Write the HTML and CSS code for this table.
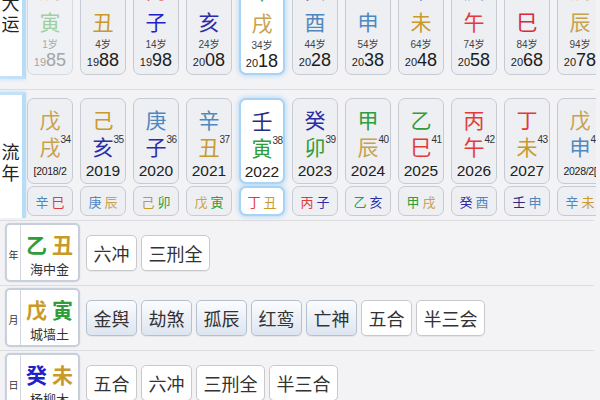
FILE: index.html
```html
<!DOCTYPE html>
<html lang="zh">
<head>
<meta charset="utf-8">
<link rel="stylesheet" href="styles.css">
</head>
<body>
<div class="page">
  <section class="dayun">
    <div class="side side-top"><span>大</span><span>运</span></div>
    <div class="cards">
      <div class="card dim"><span class="gz st tu-l">戊</span><span class="gz mu-l">寅</span><span class="age">1岁</span><span class="yr"><small>19</small>85</span></div>
      <div class="card"><span class="gz st huo">丁</span><span class="gz tu">丑</span><span class="age">4岁</span><span class="yr"><small>19</small>88</span></div>
      <div class="card"><span class="gz st huo">丙</span><span class="gz shui2">子</span><span class="age">14岁</span><span class="yr"><small>19</small>98</span></div>
      <div class="card"><span class="gz st mu">乙</span><span class="gz shui">亥</span><span class="age">24岁</span><span class="yr"><small>20</small>08</span></div>
      <div class="card sel"><span class="gz st mu">甲</span><span class="gz tu-l">戌</span><span class="age">34岁</span><span class="yr"><small>20</small>18</span></div>
      <div class="card"><span class="gz st shui">癸</span><span class="gz jin">酉</span><span class="age">44岁</span><span class="yr"><small>20</small>28</span></div>
      <div class="card"><span class="gz st shui">壬</span><span class="gz jin">申</span><span class="age">54岁</span><span class="yr"><small>20</small>38</span></div>
      <div class="card"><span class="gz st jin">辛</span><span class="gz tu">未</span><span class="age">64岁</span><span class="yr"><small>20</small>48</span></div>
      <div class="card"><span class="gz st jin">庚</span><span class="gz huo">午</span><span class="age">74岁</span><span class="yr"><small>20</small>58</span></div>
      <div class="card"><span class="gz st tu">己</span><span class="gz huo2">巳</span><span class="age">84岁</span><span class="yr"><small>20</small>68</span></div>
      <div class="card"><span class="gz st tu">戊</span><span class="gz tu-l">辰</span><span class="age">94岁</span><span class="yr"><small>20</small>78</span></div>
    </div>
  </section>

  <div class="sep"></div>

  <section class="liunian">
    <div class="side side-mid"><span>流</span><span>年</span></div>
    <div class="ln-body">
      <div class="cards">
        <div class="card2"><span class="gz tu-l">戊</span><span class="gz br tu-l">戌<sup>34</sup></span><span class="y2 sm">[2018/2</span></div>
        <div class="card2"><span class="gz tu">己</span><span class="gz br shui">亥<sup>35</sup></span><span class="y2">2019</span></div>
        <div class="card2"><span class="gz jin">庚</span><span class="gz br shui">子<sup>36</sup></span><span class="y2">2020</span></div>
        <div class="card2"><span class="gz jin">辛</span><span class="gz br tu">丑<sup>37</sup></span><span class="y2">2021</span></div>
        <div class="card2 sel"><span class="gz navy">壬</span><span class="gz br mu">寅<sup>38</sup></span><span class="y2">2022</span></div>
        <div class="card2"><span class="gz shui">癸</span><span class="gz br mu">卯<sup>39</sup></span><span class="y2">2023</span></div>
        <div class="card2"><span class="gz mu">甲</span><span class="gz br tu-l">辰<sup>40</sup></span><span class="y2">2024</span></div>
        <div class="card2"><span class="gz mu">乙</span><span class="gz br huo">巳<sup>41</sup></span><span class="y2">2025</span></div>
        <div class="card2"><span class="gz huo">丙</span><span class="gz br huo">午<sup>42</sup></span><span class="y2">2026</span></div>
        <div class="card2"><span class="gz huo">丁</span><span class="gz br tu">未<sup>43</sup></span><span class="y2">2027</span></div>
        <div class="card2"><span class="gz tu-l">戊</span><span class="gz br jin">申<sup>44</sup></span><span class="y2 sm">2028/2[</span></div>
      </div>
      <div class="cards subs">
        <div class="sub"><span class="jin">辛</span><span class="huo">巳</span></div>
        <div class="sub"><span class="jin">庚</span><span class="tu-l">辰</span></div>
        <div class="sub"><span class="tu">己</span><span class="mu">卯</span></div>
        <div class="sub"><span class="tu-l">戊</span><span class="mu">寅</span></div>
        <div class="sub sel"><span class="huo">丁</span><span class="tu">丑</span></div>
        <div class="sub"><span class="huo">丙</span><span class="shui">子</span></div>
        <div class="sub"><span class="mu">乙</span><span class="shui">亥</span></div>
        <div class="sub"><span class="mu">甲</span><span class="tu-l">戌</span></div>
        <div class="sub"><span class="shui">癸</span><span class="jin">酉</span></div>
        <div class="sub"><span class="navy">壬</span><span class="jin">申</span></div>
        <div class="sub"><span class="jin">辛</span><span class="tu">未</span></div>
      </div>
    </div>
  </section>

  <div class="sep sep-b"></div>

  <div class="prow">
    <div class="pillar"><span class="pl">年</span><div class="pm"><div class="gzb"><b class="mu">乙</b><b class="tu">丑</b></div><div class="ny">海中金</div></div></div>
    <div class="tags"><span class="tag">六冲</span><span class="tag">三刑全</span></div>
  </div>
  <div class="sep"></div>
  <div class="prow">
    <div class="pillar"><span class="pl">月</span><div class="pm"><div class="gzb"><b class="tu">戊</b><b class="mu">寅</b></div><div class="ny">城墙土</div></div></div>
    <div class="tags"><span class="tag shen">金舆</span><span class="tag shen">劫煞</span><span class="tag shen">孤辰</span><span class="tag shen">红鸾</span><span class="tag shen">亡神</span><span class="tag">五合</span><span class="tag">半三会</span></div>
  </div>
  <div class="sep"></div>
  <div class="prow">
    <div class="pillar"><span class="pl">日</span><div class="pm"><div class="gzb"><b class="shui2">癸</b><b class="tu">未</b></div><div class="ny">杨柳木</div></div></div>
    <div class="tags"><span class="tag">五合</span><span class="tag">六冲</span><span class="tag">三刑全</span><span class="tag">半三合</span></div>
  </div>
</div>
</body>
</html>
```

FILE: styles.css
```css
* { box-sizing: border-box; }

body {
  margin: 0;
  background: #f3f3f5;
  font-family: "Liberation Sans", "Noto Sans CJK SC", sans-serif;
  color: #222;
  overflow: hidden;
}

.page {
  width: 596px;
  height: 400px;
  overflow: hidden;
}

/* colours of the five elements */
.mu { color: #2f9d3a; }
.mu-l { color: #9fd0a0; }
.huo { color: #e23a3a; }
.huo2 { color: #d8283a; }
.tu { color: #c99a2a; }
.tu-l { color: #c9a24e; }
.jin { color: #4f88bf; }
.shui { color: #2c2ca6; }
.shui2 { color: #1e22c8; }
.navy { color: #2b2b7c; }

.sep {
  height: 1px;
  background: #dcdcdf;
  margin-right: 2px;
}

/* side labels */
.side {
  width: 26px;
  background: #fff;
  border-right: 4px solid #b9dcf5;
  display: flex;
  flex-direction: column;
  align-items: center;
  font-family: "Noto Sans CJK SC", sans-serif;
  font-size: 18px;
  line-height: 21px;
  color: #222;
  flex-shrink: 0;
  padding-right: 1px;
}

.side-top {
  height: 106px;
  padding-top: 19px;
  border-bottom: 3px solid #c3e1f7;
  box-shadow: 0 1px 3px #cfe6f8;
}

.side-mid {
  height: 126px;
  justify-content: center;
  padding-top: 10px;
  border-top: 3px solid #c3e1f7;
  box-shadow: 0 -1px 3px #cfe6f8;
}

.cards {
  display: flex;
  gap: 7px;
  margin-left: 1px;
}

/* 大运 row */
.dayun {
  display: flex;
  align-items: flex-start;
  margin-top: -27px;
  margin-bottom: 10px;
}

.card {
  width: 46px;
  height: 102px;
  flex-shrink: 0;
  border: 1.5px solid #c6cad2;
  border-radius: 7px;
  background: #edeff3;
  display: flex;
  flex-direction: column;
  align-items: center;
  padding-top: 2px;
}

.gz {
  font-family: "Noto Sans CJK SC", sans-serif;
  font-size: 21px;
  line-height: 27px;
}

.gz.st {
  margin-bottom: 5px;
}

.age {
  font-size: 10px;
  line-height: 12px;
  margin-top: 4px;
  color: #444;
}

.yr {
  font-size: 18px;
  line-height: 18px;
  color: #1c1c1c;
}

.yr small {
  font-size: 11px;
}

.card.dim {
  background: #f0f1f4;
  border-color: #d6d9de;
}

.card.dim .age { color: #aaa; }
.card.dim .yr { color: #a5a5a5; }

.card.sel,
.card2.sel,
.sub.sel {
  background: #fff;
  border: 2px solid #a8d3f4;
  box-shadow: 0 0 5px 1px #b7dbf6;
}

/* 流年 row */
.liunian {
  display: flex;
  align-items: flex-start;
  margin-top: 2px;
  margin-bottom: 2px;
}

.ln-body {
  padding-top: 6px;
}

.card2 {
  width: 46px;
  height: 86px;
  flex-shrink: 0;
  border: 1.5px solid #c6cad2;
  border-radius: 7px;
  background: #edeff3;
  display: flex;
  flex-direction: column;
  align-items: center;
  padding-top: 7px;
}

.br {
  position: relative;
}

.br sup {
  position: absolute;
  left: 100%;
  top: 2px;
  font-family: "Liberation Sans", sans-serif;
  font-size: 10px;
  line-height: 10px;
  color: #333;
  letter-spacing: -0.5px;
}

.y2 {
  font-size: 15.5px;
  line-height: 20px;
  margin-top: 1px;
  color: #222;
}

.y2.sm {
  font-size: 10.5px;
  letter-spacing: -0.3px;
  white-space: nowrap;
}

.subs {
  margin-top: 2px;
}

.sub {
  width: 46px;
  height: 30px;
  flex-shrink: 0;
  border: 1.5px solid #c6cad2;
  border-radius: 7px;
  background: #edeff3;
  display: flex;
  align-items: center;
  justify-content: center;
  gap: 3px;
  font-family: "Noto Sans CJK SC", sans-serif;
  font-size: 13px;
}

/* pillar rows */
.prow {
  display: flex;
  align-items: center;
  padding: 2px 0 3px 5px;
}

.pillar {
  width: 75px;
  height: 59px;
  flex-shrink: 0;
  border: 2px solid #c7cfda;
  border-radius: 5px;
  background: #fff;
  display: flex;
  box-shadow: 0 0 2px #d6deea;
}

.pl {
  width: 14px;
  border-right: 1px solid #d3d8e0;
  display: flex;
  align-items: center;
  justify-content: center;
  font-family: "Noto Sans CJK SC", sans-serif;
  font-size: 10px;
  color: #333;
  padding-top: 3px;
}

.pm {
  flex: 1;
  display: flex;
  flex-direction: column;
  align-items: center;
  padding-top: 6px;
}

.gzb {
  display: flex;
  gap: 5px;
  font-family: "Noto Sans CJK SC", sans-serif;
  font-size: 21px;
  line-height: 26px;
}

.ny {
  font-family: "Noto Sans CJK SC", sans-serif;
  font-size: 13px;
  line-height: 16px;
  margin-top: 4px;
  color: #333;
}

.tags {
  display: flex;
  gap: 4px;
  margin-left: 6px;
}

.tag {
  height: 36px;
  padding: 0 6.5px;
  border: 1px solid #c9c9cc;
  border-radius: 5px;
  background: #fff;
  display: flex;
  align-items: center;
  font-family: "Noto Sans CJK SC", sans-serif;
  font-size: 18px;
  color: #333;
  white-space: nowrap;
  box-shadow: 0 1px 1px rgba(0, 0, 0, 0.06);
  flex-shrink: 0;
}

.tag.shen {
  background: linear-gradient(#fbfcfe, #dde5f0);
  border-color: #b6c1d0;
}
```
